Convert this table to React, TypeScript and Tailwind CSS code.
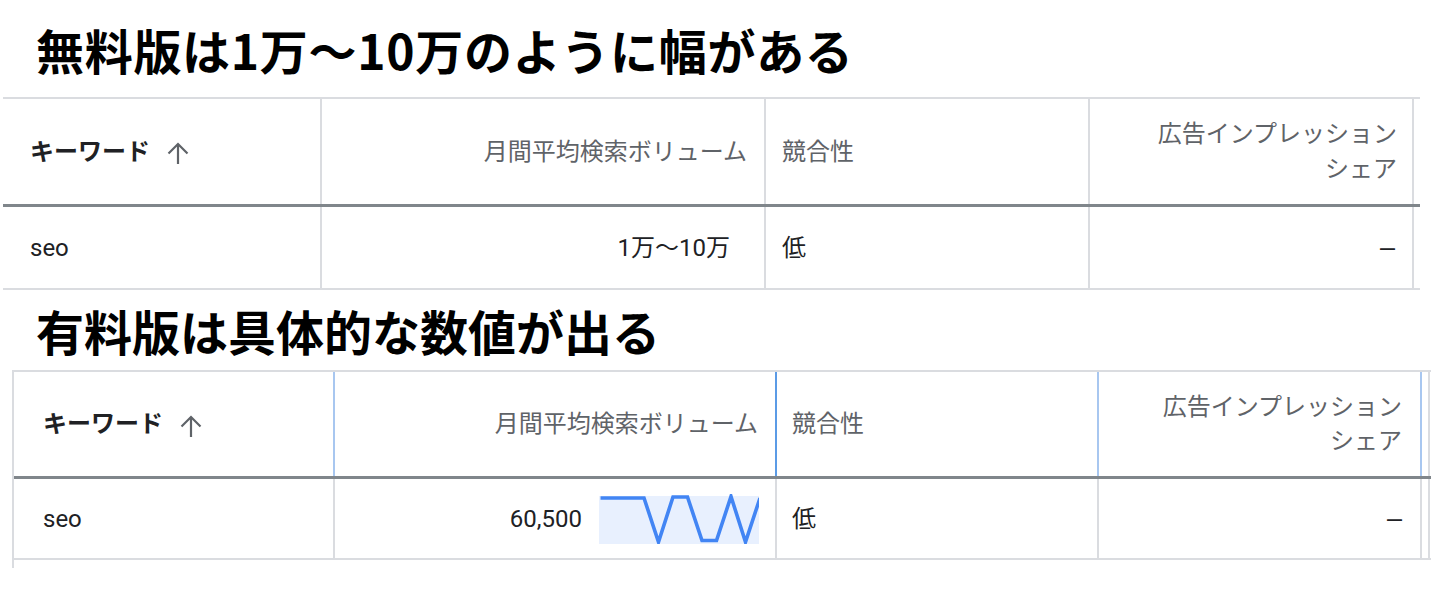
import React from 'react';

const FONT = 'font-[Roboto,"Noto_Sans_CJK_JP",sans-serif]';

const SortArrow = () => (
  <svg width="22" height="23" viewBox="0 0 22 23" className="ml-[17px] mt-[4px] shrink-0">
    <path d="M11 22V2.5M1.5 11.5L11 2l9.5 9.5" fill="none" stroke="#5f6368" strokeWidth="2.2" />
  </svg>
);

// 12ヶ月分の推移 (有料版のみ)
const trend = [2, 2, 2, 2, 46, 1, 1, 44.5, 44.5, 0.5, 46, 2];

const Sparkline = () => {
  const pts = trend.map((v, i) => `${1.5 + i * 14.5},${v + 2}`).join(' ');
  return (
    <svg width="160" height="50" viewBox="0 0 160 50" className="shrink-0">
      <rect x="0" y="2" width="160" height="48" fill="#e8f0fe" />
      <polyline points={pts} fill="none" stroke="#4285f4" strokeWidth="3.6" strokeLinejoin="miter" />
    </svg>
  );
};

const Heading: React.FC<{ text: string; h: string; track?: string }> = ({ text, h, track = '' }) => (
  <div className={`${h} flex items-center pl-[36px]`}>
    <h2 className={`text-[48px] leading-none font-bold text-black font-["Noto_Sans_CJK_JP",sans-serif] ${track}`}>{text}</h2>
  </div>
);

const Dash = () => <span className='text-[27px] leading-none font-["Liberation_Sans",sans-serif]'>–</span>;

const FreeTable = () => (
  <div className="ml-[3px] w-[1417px] border-t-2 border-b-2 border-[#dadce0]">
    <div className="flex h-[105px]">
      <div className="w-[319px] border-r-2 border-[#dadce0] flex items-center pl-[27px]">
        <span className="text-[24px] font-bold text-[#202124]">キーワード</span>
        <SortArrow />
      </div>
      <div className="w-[444px] border-r-2 border-[#dadce0] flex items-center justify-end pr-[17px]">
        <span className="text-[24px] text-[#5f6368]">月間平均検索ボリューム</span>
      </div>
      <div className="w-[324px] border-r-2 border-[#dadce0] flex items-center pl-[16px]">
        <span className="text-[24px] text-[#5f6368]">競合性</span>
      </div>
      <div className="w-[324px] border-r-2 border-[#dadce0] flex items-center justify-end pr-[15px]">
        <span className="text-[24px] leading-[35px] text-[#5f6368] text-right">広告インプレッション<br />シェア</span>
      </div>
    </div>
    <div className="h-[3px] bg-[#80868b]" />
    <div className="flex h-[81px] text-[24px] text-[#202124]">
      <div className="w-[319px] border-r-2 border-[#dadce0] flex items-center pl-[27px]">seo</div>
      <div className="w-[444px] border-r-2 border-[#dadce0] flex items-center justify-end pr-[34px]">1万～10万</div>
      <div className="w-[324px] border-r-2 border-[#dadce0] flex items-center pl-[16px]">低</div>
      <div className="w-[324px] border-r-2 border-[#dadce0] flex items-center justify-end pr-[17px]"><Dash /></div>
    </div>
  </div>
);

const PaidTable = () => (
  <div className="ml-[12px] w-[1419px]">
    <div className="border-l-2 border-t-2 border-[#dadce0]">
      <div className="flex h-[104px]">
        <div className="w-[321px] border-r-2 border-[#a8c7f0] flex items-center pl-[29px]">
          <span className="text-[24px] font-bold text-[#202124]">キーワード</span>
          <SortArrow />
        </div>
        <div className="w-[442px] border-r-2 border-[#5b9be6] flex items-center justify-end pr-[17px]">
          <span className="text-[24px] text-[#5f6368]">月間平均検索ボリューム</span>
        </div>
        <div className="w-[322px] border-r-2 border-[#a8c7f0] flex items-center pl-[15px]">
          <span className="text-[24px] text-[#5f6368]">競合性</span>
        </div>
        <div className="w-[323px] border-r-2 border-[#a8c7f0] flex items-center justify-end pr-[18px]">
          <span className="text-[24px] leading-[34px] text-[#5f6368] text-right">広告インプレッション<br />シェア</span>
        </div>
        <div className="w-[8px] border-r-2 border-[#dadce0]" />
      </div>
      <div className="h-[3px] bg-[#80868b]" />
      <div className="flex h-[81px] text-[24px] text-[#202124] border-b-2 border-[#dadce0]">
        <div className="w-[321px] border-r-2 border-[#dadce0] flex items-center pl-[29px]">seo</div>
        <div className="w-[442px] border-r-2 border-[#dadce0] flex items-center justify-end gap-[17px] pr-[16px]">
          <span>60,500</span>
          <Sparkline />
        </div>
        <div className="w-[322px] border-r-2 border-[#dadce0] flex items-center pl-[15px]">低</div>
        <div className="w-[323px] border-r-2 border-[#dadce0] flex items-center justify-end pr-[18px]"><Dash /></div>
        <div className="w-[8px] border-r-2 border-[#dadce0]" />
      </div>
    </div>
    <div className="w-[2px] h-[8px] bg-[#dadce0]" />
  </div>
);

export default function App() {
  return (
    <div className={`w-[1431px] h-[600px] bg-white overflow-hidden ${FONT}`}>
      <Heading text="無料版は1万～10万のように幅がある" h="h-[97px]" track="tracking-[0.7px]" />
      <FreeTable />
      <Heading text="有料版は具体的な数値が出る" h="h-[80px]" />
      <PaidTable />
    </div>
  );
}
